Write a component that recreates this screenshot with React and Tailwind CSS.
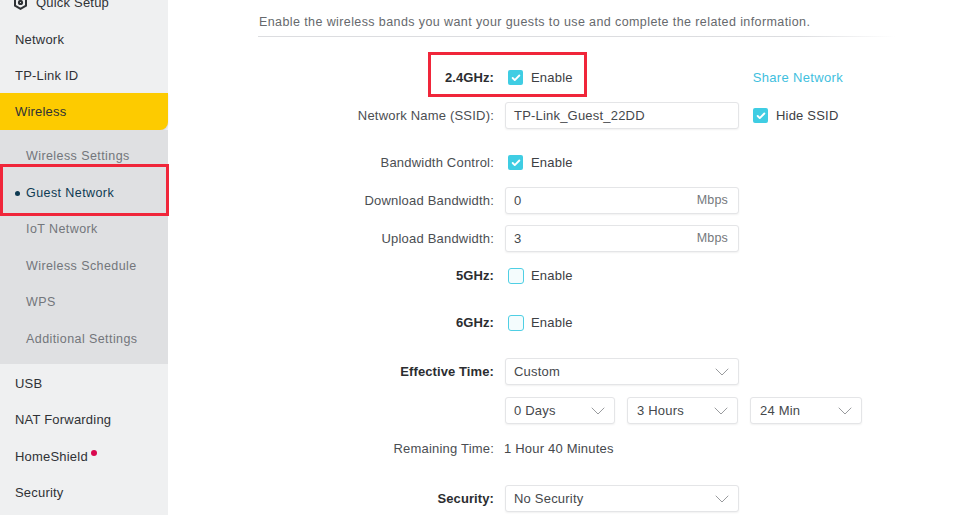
import React from 'react';
import { ChevronDown, Check } from 'lucide-react';

const subItems = ['Wireless Settings', 'Guest Network', 'IoT Network', 'Wireless Schedule', 'WPS', 'Additional Settings'];

const NavItem = ({ children, className = 'h-[36.5px]' }) => (
  <div className={`${className} flex items-center pl-[15px] text-[13px] tracking-[0.2px] text-[#2f3236]`}>{children}</div>
);

const Sidebar = () => (
  <aside className="w-[168px] shrink-0 bg-[#eff0f1] -mt-[16px] h-[560px]">
    <div className="h-[37px] flex items-center pl-[13px] gap-[8px] text-[13px] tracking-[0.2px] text-[#2f3236]">
      <svg className="w-[15px] h-[15px]" viewBox="0 0 15 15" fill="none" stroke="#2f3236" strokeWidth="2">
        <path d="M7.5 1.2 13 4.3v6.4l-5.5 3.1L2 10.7V4.3z" />
        <circle cx="7.5" cy="7.5" r="1.6" />
      </svg>
      <span>Quick Setup</span>
    </div>
    <NavItem>Network</NavItem>
    <NavItem className="h-[35.5px]">TP-Link ID</NavItem>
    <div className="h-[37px] flex items-center pl-[15px] text-[13px] tracking-[0.2px] text-[#2f3236] bg-[#fdcb00] rounded-br-[8px] shadow-[0_1px_2px_rgba(0,0,0,0.12)]">
      Wireless
    </div>
    <div className="bg-[#dfe0e2] h-[234px] pt-[8.5px]">
      {subItems.map((item) => (
        <div
          key={item}
          className={`h-[36.5px] flex items-center pl-[26px] text-[12.5px] tracking-[0.42px] relative ${
            item === 'Guest Network' ? 'text-[#0e3a52]' : 'text-[#73767b]'
          }`}
        >
          {item === 'Guest Network' && (
            <span className="absolute left-[15px] w-[5px] h-[5px] rounded-full bg-[#0e3a52]" />
          )}
          {item}
        </div>
      ))}
    </div>
    <div className="pt-[1px]">
      <NavItem>USB</NavItem>
      <NavItem>NAT Forwarding</NavItem>
      <NavItem>
        HomeShield
        <span className="w-[6px] h-[6px] rounded-full bg-[#d9084f] ml-[3px] -mt-[6px]" />
      </NavItem>
      <NavItem>Security</NavItem>
    </div>
  </aside>
);

const Box = ({ className = '', children }) => (
  <div className={`h-[27px] rounded-[3px] border border-[#e4e5e7] shadow-[0_1px_2px_rgba(0,0,0,0.06)] bg-white flex items-center text-[13px] tracking-[0.2px] text-[#45484c] ${className}`}>
    {children}
  </div>
);

const Select = ({ width, value, pad = 'pl-[8px]' }) => (
  <Box className={`${width} ${pad} pr-[4px] justify-between`}>
    <span>{value}</span>
    <ChevronDown className="w-[24px] h-[24px] text-[#6d7074]" strokeWidth={0.7} />
  </Box>
);

const Checkbox = ({ checked }) =>
  checked ? (
    <span className="w-[15px] h-[15px] rounded-[2px] bg-[#3fcde3] flex items-center justify-center">
      <Check className="w-[10px] h-[10px] text-white" strokeWidth={4.5} />
    </span>
  ) : (
    <span className="w-[16px] h-[16px] rounded-[3px] border border-[#4fcfe4] bg-[#f4fcfd]" />
  );

const Enable = ({ checked }) => (
  <div className={`flex items-center ml-[3px] text-[13px] tracking-[0.2px] text-[#3d4044] ${checked ? 'gap-[8px]' : 'gap-[7px]'}`}>
    <Checkbox checked={checked} />
    <span>Enable</span>
  </div>
);

const Row = ({ label, bold, top, children }) => (
  <div className={`flex items-center h-[27px] ${top}`}>
    <div className={`w-[236px] text-right text-[13px] ${bold ? 'font-bold tracking-[0.1px] text-[#2b2d30]' : 'tracking-[0.2px] text-[#4b4e52]'}`}>
      {label}:
    </div>
    <div className="ml-[11px] flex items-center">{children}</div>
  </div>
);

const Unit = ({ value }) => (
  <Box className="w-[234px] pl-[8px] pr-[10px] justify-between">
    <span>{value}</span>
    <span className="text-[#75787c] text-[12.5px]">Mbps</span>
  </Box>
);

const App = () => (
  <div className="relative w-[980px] h-[515px] overflow-hidden bg-white flex font-['Liberation_Sans',Arial,sans-serif]">
    <Sidebar />
    <main className="flex-1 pl-[90px]">
      <p className="pl-[1px] pt-[13px] h-[36px] text-[12.5px] tracking-[0.4px] text-[#66696d]">
        Enable the wireless bands you want your guests to use and complete the related information.
      </p>
      <div className="w-[637px] h-[1px] bg-gradient-to-r from-[#dcdde0] from-85% to-white" />
      <div className="pt-[27px]">
        <Row label="2.4GHz" bold>
          <Enable checked />
          <span className="ml-[180px] text-[13px] tracking-[0.33px] text-[#3fc0de]">Share Network</span>
        </Row>
        <Row label="Network Name (SSID)" top="mt-[11px]">
          <Box className="w-[234px] pl-[8px]">TP-Link_Guest_22DD</Box>
          <div className="ml-[14px] flex items-center gap-[8px] text-[13px] tracking-[0.2px] text-[#3d4044]">
            <Checkbox checked />
            <span>Hide SSID</span>
          </div>
        </Row>
        <Row label="Bandwidth Control" top="mt-[20px]">
          <Enable checked />
        </Row>
        <Row label="Download Bandwidth" top="mt-[11px]">
          <Unit value="0" />
        </Row>
        <Row label="Upload Bandwidth" top="mt-[11px]">
          <Unit value="3" />
        </Row>
        <Row label="5GHz" bold top="mt-[10px]">
          <Enable />
        </Row>
        <Row label="6GHz" bold top="mt-[20px]">
          <Enable />
        </Row>
        <Row label="Effective Time" bold top="mt-[22px]">
          <Select width="w-[234px]" value="Custom" />
        </Row>
        <div className="flex gap-[12px] ml-[247px] mt-[12px]">
          <Select width="w-[110px]" value="0 Days" />
          <Select width="w-[111px]" value="3 Hours" pad="pl-[9px]" />
          <Select width="w-[112px]" value="24 Min" pad="pl-[9px]" />
        </div>
        <Row label="Remaining Time" top="mt-[11px]">
          <span className="-ml-[1px] text-[13px] tracking-[0.2px] text-[#45484c]">1 Hour 40 Minutes</span>
        </Row>
        <Row label="Security" bold top="mt-[23px]">
          <Select width="w-[234px]" value="No Security" />
        </Row>
      </div>
    </main>
    {/* red highlight boxes */}
    <div className="absolute left-0 top-[164px] w-[169px] h-[52px] border-[3px] border-[#f0263a]" />
    <div className="absolute left-[428px] top-[52px] w-[159px] h-[45px] border-[3px] border-[#f0263a]" />
  </div>
);

export default App;
